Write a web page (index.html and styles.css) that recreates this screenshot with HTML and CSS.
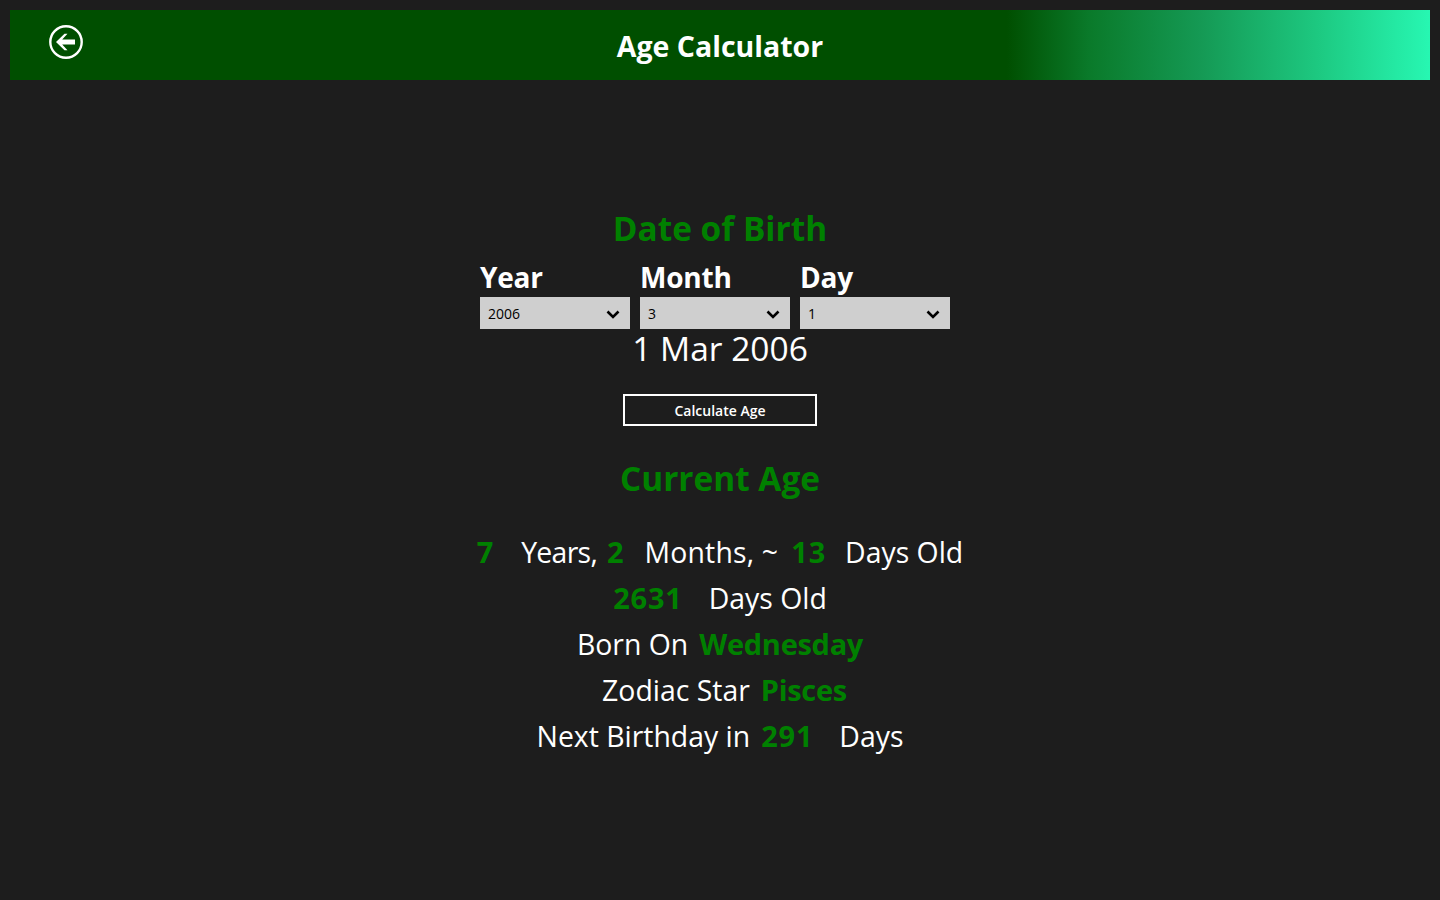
FILE: index.html
```html
<!DOCTYPE html>
<html lang="en">
<head>
    <meta charset="UTF-8">
    <meta name="viewport" content="width=device-width, initial-scale=1.0">
    <title>Age Calculator</title>
    <link rel="stylesheet" href="styles.css">
</head>
<body>
    <header class="app-bar">
        <a class="back" href="#" aria-label="Back">
            <svg width="34" height="34" viewBox="0 0 34 34">
                <circle cx="17" cy="17" r="15.7" fill="none" stroke="#fff" stroke-width="2.4"/>
                <path d="M7 17 L15.5 8.8 L18.5 8.8 L13.2 14.6 L26 14.6 L26 19.4 L13.2 19.4 L18.5 25.2 L15.5 25.2 Z" fill="#fff"/>
            </svg>
        </a>
        <h1>Age Calculator</h1>
        <span></span>
    </header>

    <main class="content">
        <h2 class="section-title first">Date of Birth</h2>

        <div class="pickers">
            <div class="picker">
                <label for="year">Year</label>
                <div class="select-wrap">
                    <select id="year"><option>2006</option></select>
                    <svg class="chevron" width="14" height="9" viewBox="0 0 14 9"><path d="M1.5 1.5 L7 7 L12.5 1.5" fill="none" stroke="#000" stroke-width="2.6"/></svg>
                </div>
            </div>
            <div class="picker">
                <label for="month">Month</label>
                <div class="select-wrap">
                    <select id="month"><option>3</option></select>
                    <svg class="chevron" width="14" height="9" viewBox="0 0 14 9"><path d="M1.5 1.5 L7 7 L12.5 1.5" fill="none" stroke="#000" stroke-width="2.6"/></svg>
                </div>
            </div>
            <div class="picker">
                <label for="day">Day</label>
                <div class="select-wrap">
                    <select id="day"><option>1</option></select>
                    <svg class="chevron" width="14" height="9" viewBox="0 0 14 9"><path d="M1.5 1.5 L7 7 L12.5 1.5" fill="none" stroke="#000" stroke-width="2.6"/></svg>
                </div>
            </div>
        </div>

        <p class="picked-date">1 Mar 2006</p>

        <button class="calc-btn" type="button">Calculate Age</button>

        <h2 class="section-title">Current Age</h2>

        <div class="results">
            <div class="row row-age">
                <b class="num">7</b>
                <span class="years">Years,</span>
                <b class="num">2</b>
                <span class="months">Months, ~</span>
                <b class="num">13</b>
                <span>Days Old</span>
            </div>
            <div class="row"><b class="num gap-wide">2631</b><span>Days Old</span></div>
            <div class="row"><span class="gap-small">Born On</span><b>Wednesday</b></div>
            <div class="row row-zodiac"><span class="gap-small">Zodiac Star</span><b>Pisces</b></div>
            <div class="row"><span class="gap-small">Next Birthday in</span><b class="num gap-wide">291</b><span>Days</span></div>
        </div>
    </main>
</body>
</html>
```

FILE: styles.css
```css
* {
    box-sizing: border-box;
}

body {
    margin: 0;
    padding: 10px;
    height: 900px;
    overflow: hidden;
    background: #1d1d1d;
    color: #fff;
    font-family: 'Open Sans', 'Noto Sans', sans-serif;
}

.app-bar {
    display: grid;
    grid-template-columns: 1fr auto 1fr;
    height: 70px;
    background: linear-gradient(90deg, #004f00 0, #004f00 70.2%, #0a7a2a 76%, #159a55 84%, #1dc880 92%, #27f7b2 100%);
}

.back {
    display: block;
    width: 34px;
    height: 34px;
    margin: 15px 0 0 39px;
}

.back svg {
    display: block;
}

.app-bar h1 {
    margin: 0;
    font-size: 28.5px;
    font-weight: 700;
    line-height: 72px;
}

.content {
    display: flex;
    flex-direction: column;
    align-items: center;
}

.section-title {
    height: 44px;
    margin: 31px 0 0;
    color: #008000;
    font-size: 33.4px;
    font-weight: 700;
    line-height: 42px;
}

.section-title.first {
    margin-top: 127px;
}

.pickers {
    display: flex;
    gap: 10px;
    margin: 8px 10px 0 0;
}

.picker {
    width: 150px;
}

.picker label {
    display: block;
    height: 38px;
    font-size: 28px;
    font-weight: 700;
    letter-spacing: -0.2px;
    line-height: 36px;
}

.select-wrap {
    position: relative;
    height: 32px;
}

.select-wrap select {
    display: block;
    width: 100%;
    height: 32px;
    padding: 0 8px;
    border: none;
    border-radius: 0;
    appearance: none;
    background: #cfcfcf;
    color: #000;
    font-family: inherit;
    font-size: 14px;
}

.chevron {
    position: absolute;
    top: 13px;
    right: 10px;
}

.picked-date {
    height: 40px;
    margin: 0;
    font-size: 33.5px;
    font-weight: 400;
    line-height: 39px;
}

.calc-btn {
    width: 194px;
    height: 32px;
    margin-top: 25px;
    border: 2px solid #fff;
    background: transparent;
    color: #fff;
    font-family: inherit;
    font-size: 14px;
    font-weight: 600;
}

.results {
    margin-top: 29px;
}

.row {
    display: flex;
    justify-content: center;
    height: 46px;
    font-size: 28.4px;
    font-weight: 400;
    line-height: 44px;
}

.row b {
    color: #008000;
    font-size: 29px;
    font-weight: 700;
    letter-spacing: -0.3px;
}

.row .num {
    letter-spacing: 0.8px;
}

.row-age b:nth-child(1) {
    margin-right: 27px;
}

.row-age b:nth-child(3) {
    margin-right: 20px;
}

.row-age b:nth-child(5) {
    margin-right: 19px;
}

.row-age .years {
    margin-right: 10px;
    letter-spacing: -0.7px;
}

.row-age .months {
    margin-right: 13px;
    letter-spacing: 0.2px;
}

.row-zodiac {
    padding-left: 9px;
}

.gap-wide {
    margin-right: 26px;
}

.gap-small {
    margin-right: 11px;
}
```
